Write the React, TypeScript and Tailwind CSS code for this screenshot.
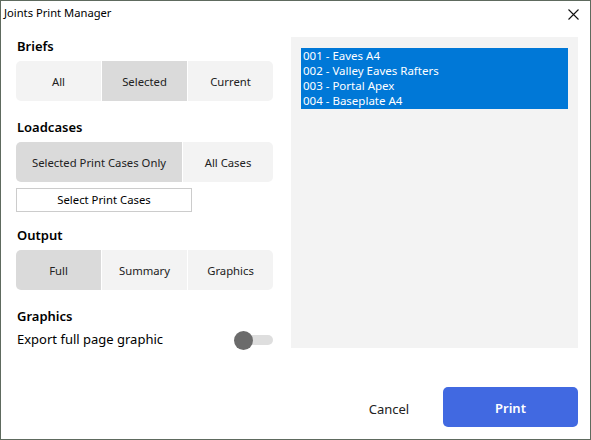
import React, { useState } from 'react';

const FONT = "font-['Noto_Sans','Open_Sans',sans-serif]";

type SegProps = {
  options: string[];
  value: string;
  onChange: (v: string) => void;
  widths: string[];
};

const Segmented: React.FC<SegProps> = ({ options, value, onChange, widths }) => (
  <div className="flex h-[40px] w-[257px] gap-px overflow-hidden rounded-[5px]">
    {options.map((opt, i) => (
      <button
        key={opt}
        onClick={() => onChange(opt)}
        className={`${widths[i]} h-full pt-[2px] text-[11.3px] text-[#222] ${
          value === opt ? 'bg-[#dadada]' : 'bg-[#f3f3f3]'
        }`}
      >
        {opt}
      </button>
    ))}
  </div>
);

const SectionTitle: React.FC<{ children: React.ReactNode; className?: string }> = ({ children, className }) => (
  <div className={`h-[18px] pl-px text-[13px] leading-[18px] font-semibold text-black ${className ?? ''}`}>{children}</div>
);

const App: React.FC = () => {
  const [brief, setBrief] = useState('Selected');
  const [loadcase, setLoadcase] = useState('Selected Print Cases Only');
  const [output, setOutput] = useState('Full');
  const [fullPage, setFullPage] = useState(false);

  const briefs = ['001 - Eaves A4', '002 - Valley Eaves Rafters', '003 - Portal Apex', '004 - Baseplate A4'];

  return (
    <div className={`${FONT} flex h-[440px] w-[591px] flex-col border border-[#5e6a5e] bg-white`}>
      {/* Title bar */}
      <div className="flex h-[25px] items-center justify-between pl-[3px] pr-[10px]">
        <span className="text-[11.2px] text-black">Joints Print Manager</span>
        <svg width="11" height="11" viewBox="0 0 11 11" className="mt-px mr-[1px]">
          <path d="M0.5 0.5 L10.5 10.5 M10.5 0.5 L0.5 10.5" stroke="#111" strokeWidth="1.1" />
        </svg>
      </div>

      {/* Body */}
      <div className="mt-[11px] flex gap-[18px] pl-[15px]">
        <div className="flex w-[257px] flex-col">
          <SectionTitle>Briefs</SectionTitle>
          <div className="mt-[6px]">
            <Segmented
              options={['All', 'Selected', 'Current']}
              value={brief}
              onChange={setBrief}
              widths={['w-[85px]', 'w-[85px]', 'w-[85px]']}
            />
          </div>

          <SectionTitle className="mt-[17px]">Loadcases</SectionTitle>
          <div className="mt-[6px]">
            <Segmented
              options={['Selected Print Cases Only', 'All Cases']}
              value={loadcase}
              onChange={setLoadcase}
              widths={['w-[166px]', 'w-[90px]']}
            />
          </div>
          <button className="mt-[6px] h-[24px] w-[176px] border border-[#cccccc] bg-white pt-px text-[11.3px] text-black">
            Select Print Cases
          </button>

          <SectionTitle className="mt-[14px]">Output</SectionTitle>
          <div className="mt-[6px]">
            <Segmented
              options={['Full', 'Summary', 'Graphics']}
              value={output}
              onChange={setOutput}
              widths={['w-[85px]', 'w-[85px]', 'w-[85px]']}
            />
          </div>

          <SectionTitle className="mt-[17px]">Graphics</SectionTitle>
          <div className="mt-[5px] flex h-[20px] items-center justify-between">
            <span className="pl-px text-[13px] text-black">Export full page graphic</span>
            <button
              onClick={() => setFullPage(!fullPage)}
              className="relative h-[20px] w-[40px]"
            >
              <span className="absolute top-[5px] left-[9px] h-[10px] w-[31px] rounded-full bg-[#dedede]" />
              <span className="absolute top-px left-px h-[19px] w-[19px] rounded-full bg-[#6b6b6b]" />
            </button>
          </div>
        </div>

        <div className="h-[311px] w-[287px] bg-[#f3f3f3] pt-[11px] pl-[10px]">
          <div className="w-[267px] bg-[#0078d7] pb-px">
            {briefs.map((b) => (
              <div key={b} className="h-[15px] pl-[2px] text-[11.5px] leading-[15px] text-white">
                {b}
              </div>
            ))}
          </div>
        </div>
      </div>

      {/* Footer */}
      <div className="mt-auto mb-[12px] flex items-center justify-end gap-[8px] pr-[12px]">
        <button className="h-[40px] w-[92px] pt-[5px] text-[13px] text-[#222]">Cancel</button>
        <button className="h-[40px] w-[135px] rounded-[5px] bg-[#4169e1] pt-[4px] text-[13px] font-semibold text-white">
          Print
        </button>
      </div>
    </div>
  );
};

export default App;
